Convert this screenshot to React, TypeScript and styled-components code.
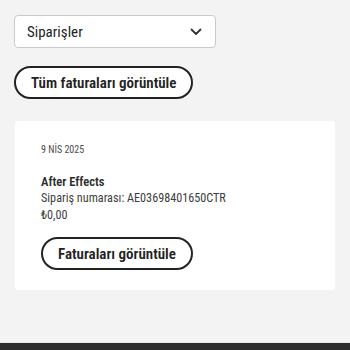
import { Fragment } from 'react'
import styled, { createGlobalStyle } from 'styled-components'

const Globals = createGlobalStyle`
* {
	box-sizing: border-box;
	font-family: Roboto, 'Liberation Sans', sans-serif;
	font-stretch: condensed;
}

body {
	margin: 0;
	padding: 0;
	background: #f3f3f3;
	color: #2c2c2c;
}
`

const Page = styled.div`
	height: 350px;
	display: flex;
	flex-direction: column;
`

const Main = styled.main`
	flex: 1;
	padding: 15px 15px 0 14px;
	display: flex;
	flex-direction: column;
	align-items: flex-start;
`

const Select = styled.div`
	width: 202px;
	height: 33px;
	background: #fff;
	border: 1px solid #cacaca;
	border-radius: 4px;
	display: flex;
	align-items: center;
	justify-content: space-between;
	padding: 0 13px 0 12px;
	font-size: 15px;
	color: #222;
`

const PillButton = styled.button<{ $top: number }>`
	margin-top: ${(p) => p.$top}px;
	height: 33px;
	padding: 0 15px;
	border: 2px solid #222;
	border-radius: 17px;
	background: #fff;
	font-size: 15px;
	font-weight: 600;
	color: #222;
`

const Card = styled.section`
	align-self: stretch;
	margin: 22px 0 0 1px;
	background: #fff;
	border-radius: 3px;
	padding: 22px 26px 20px;
	display: flex;
	flex-direction: column;
	align-items: flex-start;
`

const DateLine = styled.div`
	font-size: 10px;
	color: #4b4b4b;
	line-height: 14px;
`

const Title = styled.div`
	margin-top: 16px;
	font-size: 12.5px;
	font-weight: 600;
	color: #2c2c2c;
	line-height: 17px;
`

const Line = styled.div`
	font-size: 12.2px;
	color: #3d3d3d;
	line-height: 17px;
`

const Footer = styled.footer`
	height: 8px;
	background: #2c2c2c;
	border-top: 1px solid #e6e6e6;
`

function Chevron() {
	return (
		<svg width="12" height="8" viewBox="0 0 12 8">
			<path d="M1.5 1.5 L6 6 L10.5 1.5" fill="none" stroke="#333" strokeWidth="1.8" strokeLinecap="round" strokeLinejoin="round" />
		</svg>
	)
}

export default function App() {
	return (
		<Fragment>
			<Globals />
			<Page>
				<Main>
					<Select>
						<span>Siparişler</span>
						<Chevron />
					</Select>
					<PillButton $top={18}>Tüm faturaları görüntüle</PillButton>
					<Card>
						<DateLine>9 NİS 2025</DateLine>
						<Title>After Effects</Title>
						<Line>Sipariş numarası: AE03698401650CTR</Line>
						<Line>₺0,00</Line>
						<PillButton $top={13}>Faturaları görüntüle</PillButton>
					</Card>
				</Main>
				<Footer />
			</Page>
		</Fragment>
	)
}
